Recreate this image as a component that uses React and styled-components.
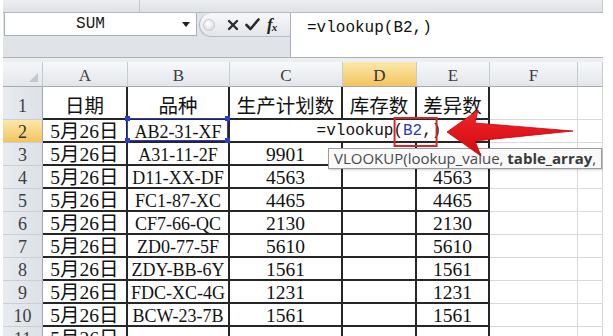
import React from 'react';
import styled, { createGlobalStyle, css } from 'styled-components';

const GlobalStyle = createGlobalStyle`
  html, body {
    margin: 0;
    padding: 0;
    background: #ffffff;
  }
  body {
    width: 613px;
    height: 336px;
    overflow: hidden;
    font-family: "Liberation Serif", "Noto Sans CJK SC", serif;
  }
`;

const Window = styled.div`
  width: 600px;
  height: 336px;
  margin-left: 3px;
  display: flex;
  flex-direction: column;
`;

/* remnants of the ribbon, cut off at the top */
const RibbonEdge = styled.div`
  height: 12px;
  display: flex;
  background: #e7e9ec;
  border-bottom: 1px solid #b3b9c1;
`;

const RibbonGroup = styled.div`
  width: ${p => p.$w}px;
  border-right: 1px solid #c3c8cf;
  background: linear-gradient(#eceef1, #dfe2e6);
`;

const FormulaBar = styled.div`
  height: 45px;
  box-sizing: border-box;
  display: grid;
  grid-template-columns: 194px 93px 1fr;
  background: #e0e3e7;
  border-bottom: 1px solid #a9b1bb;
`;

const NameArea = styled.div`
  display: flex;
  flex-direction: column;
`;

const NameBox = styled.div`
  height: 23px;
  margin-left: 1px;
  box-sizing: border-box;
  display: flex;
  align-items: center;
  background: #fff;
  border: 1px solid #a9b1bc;
  border-top: none;
`;

const NameText = styled.span`
  flex: 1;
  text-align: center;
  padding-right: 6px;
  font-family: "Liberation Mono", monospace;
  font-size: 16px;
  color: #1a1a1a;
`;

const Caret = styled.span`
  width: 0;
  height: 0;
  margin-right: 6px;
  border-left: 4px solid transparent;
  border-right: 4px solid transparent;
  border-top: 5px solid #222;
`;

const ButtonArea = styled.div`
  padding-left: 2px;
`;

const Pill = styled.div`
  height: 24px;
  box-sizing: border-box;
  display: flex;
  align-items: center;
  border: 1px solid #b6bcc4;
  border-top: none;
  border-right: none;
  border-radius: 12px 0 0 12px;
  background: linear-gradient(#f8f8f9, #e3e5e8);
`;

const Bubble = styled.span`
  width: 10px;
  height: 10px;
  margin-left: 3px;
  border-radius: 50%;
  border: 1px solid #c4c9cf;
  background: radial-gradient(circle at 40% 35%, #ffffff, #d3d7dc);
`;

const IconSlot = styled.span`
  display: flex;
  margin-left: ${p => p.$gap}px;
`;

const Fx = styled.span`
  margin-left: 7px;
  font-family: "Liberation Serif", serif;
  font-style: italic;
  font-weight: 700;
  font-size: 17px;
  color: #222;
  letter-spacing: -1px;

  & sub {
    font-size: 11px;
    vertical-align: -1px;
  }
`;

const FormulaInput = styled.div`
  background: #fff;
  border-left: 1px solid #a9b1bc;
  padding: 6px 0 0 16px;
  font-family: "Liberation Mono", monospace;
  font-size: 16px;
  line-height: 19px;
  color: #111;
`;

const BarGap = styled.div`
  height: 4px;
  background: #eceef1;
`;

const Sheet = styled.div`
  position: relative;
  flex: 1;
  overflow: hidden;
  display: grid;
  grid-template-columns: 40px 85px 102px 113px 74px 73px 88px 25px;
  grid-template-rows: 25px 33px repeat(10, 23px);
`;

const Corner = styled.div`
  position: relative;
  box-sizing: border-box;
  background: linear-gradient(#f5f6f8, #e3e6eb);
  border-right: 1px solid #c2c8d0;
  border-bottom: 1px solid #a3acb8;

  &::after {
    content: '';
    position: absolute;
    right: 4px;
    bottom: 4px;
    border-left: 9px solid transparent;
    border-bottom: 9px solid #c3c8cf;
  }
`;

const goldHead = css`
  background: linear-gradient(#fce8ab, #f3c460);
  color: #333;
`;

const ColHead = styled.div`
  box-sizing: border-box;
  display: flex;
  align-items: center;
  justify-content: center;
  padding-top: 3px;
  font-size: 17px;
  color: #3d3d3d;
  background: linear-gradient(#f7f8fa, #e2e6eb);
  border-right: 1px solid #c6ccd4;
  border-bottom: 1px solid #a3acb8;
  ${p => p.$active && goldHead}
`;

const RowHead = styled.div`
  box-sizing: border-box;
  display: flex;
  align-items: ${p => (p.$tall ? 'flex-end' : 'center')};
  justify-content: center;
  padding: ${p => (p.$tall ? '0 0 4px' : '1px 0 0')};
  font-size: 18px;
  line-height: 1;
  color: #3f3f3f;
  background: linear-gradient(90deg, #e8ebef, #dde1e7);
  border-right: 1px solid #9ea8b5;
  border-bottom: 1px solid #c9cfd6;
  ${p => p.$active && goldHead}
`;

const Cell = styled.div`
  position: relative;
  box-sizing: border-box;
  display: flex;
  align-items: ${p => (p.$title ? 'flex-end' : 'center')};
  justify-content: center;
  white-space: nowrap;
  line-height: 1;
  padding: ${p => (p.$title ? '0 0 4px' : '2px 0 0')};
  font-size: ${p => (p.$code ? '18px' : '19.5px')};
  color: #121212;
  border-right: ${p => (p.$ruled ? '2px solid #262626' : '1px solid #d9d9d9')};
  border-bottom: ${p => (p.$ruled ? '2px solid #262626' : '1px solid #d9d9d9')};
  ${p => p.$title && css`
    font-family: "Noto Sans CJK SC", sans-serif;
    font-size: 19.5px;
  `}
`;

const RefBox = styled.div`
  position: absolute;
  inset: -2px 0 0 -1px;
  border: 1.5px solid #2d3bd3;
  pointer-events: none;
`;

const Handle = styled.span`
  position: absolute;
  width: 5px;
  height: 5px;
  background: #2d3bd3;
  ${p => (p.$top ? 'top: -3px;' : 'bottom: -3px;')}
  ${p => (p.$left ? 'left: -3px;' : 'right: -3px;')}
`;

const EditBox = styled.div`
  position: absolute;
  top: 0;
  bottom: 0;
  left: 50%;
  transform: translateX(-50%);
  z-index: 2;
  display: flex;
  align-items: center;
  padding: 0 3px;
  background: #fff;
  font-family: "Liberation Mono", monospace;
  font-size: 16px;
  color: #111;
`;

const RefMark = styled.span`
  position: relative;

  &::after {
    content: '';
    position: absolute;
    left: 0;
    right: -6px;
    top: -6px;
    bottom: -8px;
    border: 2px solid #d3262b;
  }
`;

const RefName = styled.span`
  color: #2d3bb8;
`;

const Tooltip = styled.div`
  position: absolute;
  left: 325px;
  top: 86px;
  z-index: 3;
  height: 21px;
  box-sizing: border-box;
  display: flex;
  align-items: center;
  padding: 0 5px;
  white-space: nowrap;
  line-height: 1;
  background: #f9f9f9;
  border: 1px solid #9b9b9b;
  box-shadow: 1px 1px 2px rgba(0, 0, 0, 0.2);
  font-family: "Open Sans", sans-serif;
  font-size: 15px;
  color: #4a4a4a;

  & b {
    font-weight: 700;
    color: #3a3a3a;
  }
`;

const Arrow = styled.svg`
  position: absolute;
  left: 437px;
  top: 43px;
  z-index: 4;
  overflow: visible;
`;

const CloseIcon = () => (
  <svg width="12" height="12" viewBox="0 0 12 12">
    <path d="M2 2 L10 10 M10 2 L2 10" stroke="#2a2a2a" strokeWidth="2.4" strokeLinecap="round" />
  </svg>
);

const CheckIcon = () => (
  <svg width="15" height="13" viewBox="0 0 15 13">
    <path d="M1.5 7 L5.5 11 L13.5 1.5" fill="none" stroke="#2a2a2a" strokeWidth="2.6" strokeLinecap="round" strokeLinejoin="round" />
  </svg>
);

const ROWS = [
  ['日期', '品种', '生产计划数', '库存数', '差异数'],
  ['5月26日', 'AB2-31-XF', '', '', ''],
  ['5月26日', 'A31-11-2F', '9901', '', ''],
  ['5月26日', 'D11-XX-DF', '4563', '', '4563'],
  ['5月26日', 'FC1-87-XC', '4465', '', '4465'],
  ['5月26日', 'CF7-66-QC', '2130', '', '2130'],
  ['5月26日', 'ZD0-77-5F', '5610', '', '5610'],
  ['5月26日', 'ZDY-BB-6Y', '1561', '', '1561'],
  ['5月26日', 'FDC-XC-4G', '1231', '', '1231'],
  ['5月26日', 'BCW-23-7B', '1561', '', '1561'],
  ['5月26日', '', '', '', ''],
];

const LETTERS = ['A', 'B', 'C', 'D', 'E', 'F', ''];

const Formula = () => (
  <>
    =vlookup<RefMark>(<RefName>B2</RefName>,</RefMark>)
  </>
);

const App = () => (
  <>
    <GlobalStyle />
    <Window>
      <RibbonEdge>
        <RibbonGroup $w={136} />
        <RibbonGroup $w={464} />
      </RibbonEdge>

      <FormulaBar>
        <NameArea>
          <NameBox>
            <NameText>SUM</NameText>
            <Caret />
          </NameBox>
        </NameArea>
        <ButtonArea>
          <Pill>
            <Bubble />
            <IconSlot $gap={12}><CloseIcon /></IconSlot>
            <IconSlot $gap={6}><CheckIcon /></IconSlot>
            <Fx>f<sub>x</sub></Fx>
          </Pill>
        </ButtonArea>
        <FormulaInput>=vlookup(B2,)</FormulaInput>
      </FormulaBar>
      <BarGap />

      <Sheet>
        <Corner />
        {LETTERS.map((l, i) => (
          <ColHead key={i} $active={l === 'D'}>{l}</ColHead>
        ))}

        {ROWS.map((row, r) => {
          const n = r + 1;
          return (
            <React.Fragment key={n}>
              <RowHead $active={n === 2} $tall={n === 1}>{n}</RowHead>
              {row.map((value, c) => (
                <Cell key={c} $ruled $title={n === 1} $code={c === 1}>
                  {value}
                  {n === 2 && c === 1 && (
                    <RefBox>
                      <Handle $top $left />
                      <Handle $top />
                      <Handle $left />
                      <Handle />
                    </RefBox>
                  )}
                  {n === 2 && c === 3 && (
                    <EditBox><Formula /></EditBox>
                  )}
                </Cell>
              ))}
              <Cell />
              <Cell />
            </React.Fragment>
          );
        })}

        <Tooltip>
          VLOOKUP(lookup_value,&nbsp;<b>table_array</b>,
        </Tooltip>

        <Arrow width="140" height="56" viewBox="0 0 140 56">
          <defs>
            <linearGradient id="arrowRed" x1="0" y1="0" x2="0" y2="1">
              <stop offset="0" stopColor="#f0262c" />
              <stop offset="1" stopColor="#d4080f" />
            </linearGradient>
          </defs>
          <polygon
            points="7,27 38,5 35,18 133,26 35,36 41,51"
            fill="url(#arrowRed)"
            stroke="#c4070d"
            strokeWidth="0.8"
            strokeLinejoin="round"
          />
        </Arrow>
      </Sheet>
    </Window>
  </>
);

export default App;
